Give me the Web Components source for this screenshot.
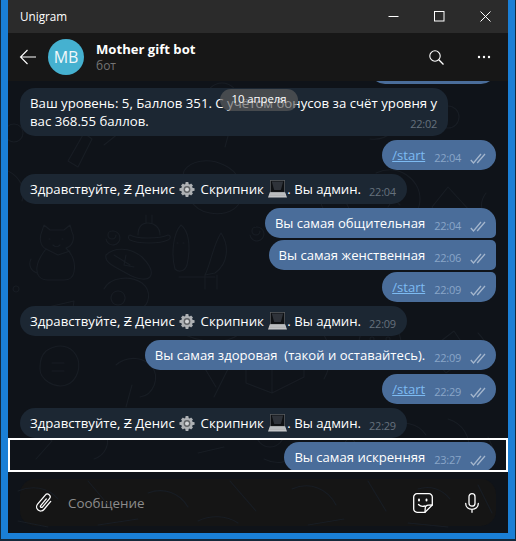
<!DOCTYPE html>
<html><head><meta charset="utf-8">
<style>
html,body{margin:0;height:100%;background:#15293b;overflow:hidden}
body{font-family:"Open Sans","Noto Sans",sans-serif;}
</style></head><body>
<ug-window>
  <ug-title slot="title">Unigram</ug-title>
  <ug-header slot="header" name="Mother gift bot" sub="бот" initials="MB"></ug-header>
  <ug-chat slot="chat">
    <ug-bubble out clip link time="22:02">/start</ug-bubble>
    <ug-bubble time="22:02" wide>Ваш уровень: 5, Баллов 351. С учётом бонусов за счёт уровня у<br>вас 368.55 баллов.</ug-bubble>
    <ug-bubble out link time="22:04">/start</ug-bubble>
    <ug-bubble time="22:04"><ug-greet></ug-greet></ug-bubble>
    <ug-bubble out group="first" time="22:04">Вы самая общительная</ug-bubble>
    <ug-bubble out group="mid" time="22:06">Вы самая женственная</ug-bubble>
    <ug-bubble out group="last" link time="22:09">/start</ug-bubble>
    <ug-bubble time="22:09"><ug-greet></ug-greet></ug-bubble>
    <ug-bubble out time="22:09">Вы самая здоровая  (такой и оставайтесь).</ug-bubble>
    <ug-bubble out link time="22:29">/start</ug-bubble>
    <ug-bubble time="22:29"><ug-greet></ug-greet></ug-bubble>
    <ug-bubble out selected time="23:27">Вы самая искренняя</ug-bubble>
  </ug-chat>
  <ug-composer slot="composer"></ug-composer>
</ug-window>
<script>
function def(name, css, html){
  customElements.define(name, class extends HTMLElement{
    connectedCallback(){
      if(this.shadowRoot) return;
      const r=this.attachShadow({mode:'open'});
      r.innerHTML='<style>'+css+'</style>'+(typeof html==='function'?html(this):html);
    }
  });
}
const doodles=`<svg class="bg" width="500" height="452" viewBox="0 0 500 452" fill="none" stroke="#181d24" stroke-width="1.100" stroke-linecap="round" stroke-linejoin="round">
<g transform="translate(26,144)"><path d="M8 6l2-6 6 5h14l6-5 2 7c3 6 1 14-6 16 6 6 10 14 8 24-1 6-5 8-10 8H14C6 55 2 50 3 42c1-8 5-13 9-18C6 21 5 13 8 6z"/><path d="M15 14h1M28 14h1M19 20c2 2 5 2 7 0M3 48c-6-2-9-8-6-14M12 24l12 6 12-4"/></g>
<g transform="translate(96,166)"><path d="M2 8c8-8 24-8 36 2 6 6 12 14 8 20-4 4-14 2-24-4C12 20 0 16 2 8z"/><path d="M10 8l16 10M22 8l-2 10 10 2"/></g>
<g transform="translate(122,134)"><path d="M0 20c6 4 30 4 38 0 3 0 3 4 0 5-8 4-30 4-38 0-2-1-2-5 0-5zM8 20c0-8 4-12 10-12s12 4 12 12M16 8V0M22 8V0"/></g>
<g transform="translate(165,144)"><path d="M8 0c8 6 10 22 6 40-2 6-8 8-12 4C-2 30 0 8 8 0z"/><path d="M4 18h1M10 18h1M6 52h36"/></g>
<g transform="translate(195,152)"><path d="M18 0c8 12 8 30-6 40l-10 2C8 30 10 12 18 0z"/><path d="M2 42v14M14 42v14"/></g>
<path d="M108 154a4 4 0 1 1-4-4 7 7 0 1 1-6 8"/>
<path d="M252 150a4 4 0 1 1-4-4 7 7 0 1 1-6 8"/>
<g transform="translate(168,80)"><path d="M8 10c6-10 24-14 40-6 14 6 24 24 14 40-6 8-18 10-28 8C16 50 2 26 8 10z"/><path d="M22 28h1M40 28h1M26 38c4 3 10 3 14 0"/></g>
<path d="M90 12c6 10 22 10 30 0M80 40c12-6 30-6 44 2M96 64l20-16"/>
<circle cx="214" cy="18" r="16"/><path d="M205 42l18 2-6 22"/>
<g transform="translate(60,50)"><path d="M0 30l16-28 8 6-14 28zM4 44h28"/></g>
<path d="M342 22c18-14 40-8 46 8s-8 30-26 28"/><circle cx="440" cy="36" r="11"/><path d="M436 62c8 12 26 14 34 4"/>
<path d="M316 96c-8 12-6 34 10 42M330 104l14 30-14 8"/>
<path d="M368 92c22-10 44 6 44 26s-24 30-42 20"/><path d="M378 110l14 14M392 108l-12 18"/>
<path d="M440 106l22 24-22 16-16-20zM478 112c-6 8-6 16 0 24"/>
<path d="M0 90c12 6 18 18 14 30M30 96c-2 6 0 12 6 14"/><circle cx="6" cy="52" r="9"/>
<g transform="translate(92,194)"><path d="M4 14C10 2 30 0 42 8c10 8 8 22-2 26"/><path d="M18 16a7 7 0 1 0 0.100 0"/></g>
<path d="M40 226l26-6-2 14-24 4zM8 205a3 3 0 1 0 .1 0"/>
<g transform="translate(236,262)"><path d="M2 14l30-14 28 8-32 14zM2 14v26l26 10V22M60 8v26L28 50"/></g>
<g transform="translate(30,264)"><path d="M8 6c12-8 24-6 30 4s2 26-10 30S2 34 2 24 4 10 8 6zM14 18h12M14 26h12"/></g>
<path d="M108 284c12-10 28-8 36 2s2 28-12 30M124 304l-6 22"/>
<path d="M170 250c20 12 46 14 60 4M190 276l18 30M224 280l-18 36"/>
<g transform="translate(350,240)"><circle cx="22" cy="22" r="21"/><circle cx="14" cy="18" r="2"/><circle cx="30" cy="18" r="2"/><path d="M12 30c6 5 14 5 20 0"/></g>
<path d="M316 254c8 14 8 30 0 44M298 272h34"/>
<path d="M420 270l26-20 16 24-24 18zM470 252c8 8 12 18 10 30"/>
<path d="M60 354c12-12 28-10 38 0 4 8 0 20-12 24M22 344l22 16-16 18"/>
<path d="M170 346c16-8 30-4 40 6M190 372l26-6"/><circle cx="262" cy="352" r="14"/><path d="M256 378c12 6 24 4 32-4"/>
<path d="M330 340l24 30M354 340l-24 30M380 348c14-10 30-6 38 6"/><path d="M440 338c14 4 24 18 20 34M480 356l8 18"/>
<path d="M10 410c14-6 30-4 40 8M80 400l22 26M140 412c16-6 32 0 40 14M222 400l26 30M284 408c18-8 36 0 44 16M360 400l18 30M410 408c12-4 24 0 32 10M470 404l14 28"/>
<path d="M10 440l30 6M90 444l40-6M190 440c12-6 28-6 40 2M300 444l36-6M400 442l40 4"/>
</svg>`;
def('ug-window',`:host{display:flex;flex-direction:column;box-sizing:border-box;width:514px;height:539px;margin:0 1px;border:solid #1a7fd6;border-width:0 7px 6px 7px;background:#10141a;}
.wall{flex:1;min-height:0;position:relative;display:flex;flex-direction:column;overflow:hidden;background:#0f1319}
.bg{position:absolute;left:0;top:0}
`,`<slot name="title"></slot><slot name="header"></slot><div class="wall">${doodles}<slot name="chat"></slot><slot name="composer"></slot></div>`);

def('ug-title',`:host{display:flex;flex:none;align-items:center;height:33px;background:#2b2b2b;color:#fff;font:11.700px/1 "Open Sans",sans-serif}
.t{margin-left:12px;flex:1}
.b{width:46px;height:33px;display:flex;align-items:center;justify-content:center}
svg{display:block}`,
`<span class="t"><slot></slot></span>
<span class="b"><svg width="11" height="11" viewBox="0 0 11 11"><path d="M0.500 5.500h10" stroke="#fff" fill="none"/></svg></span>
<span class="b"><svg width="11" height="11" viewBox="0 0 11 11"><rect x=".5" y=".5" width="9.500" height="9.500" stroke="#fff" fill="none"/></svg></span>
<span class="b"><svg width="11" height="11" viewBox="0 0 11 11"><path d="M.5.5l10 10M10.500.5l-10 10" stroke="#fff" fill="none"/></svg></span>`);

def('ug-header',`:host{display:flex;flex:none;align-items:center;height:48px;background:#171717;color:#fff;box-sizing:border-box}
.back{width:40px;display:flex;justify-content:center}
.av{width:36px;height:36px;border-radius:50%;background:#45b1d0;color:#f2f8fb;font:16px/36px "Open Sans",sans-serif;text-align:center}
.info{margin-left:12px;flex:1;display:flex;flex-direction:column;margin-top:-1px}
.n{font:700 13.100px/18px "Open Sans",sans-serif}
.s{font:12px/16px "Open Sans",sans-serif;color:#747474}
.i{width:48px;height:48px;display:flex;align-items:center;justify-content:center}
`,h=>`<span class="back"><svg width="18" height="16" viewBox="0 0 18 16"><path d="M17 8H1.500M8.500 1L1.500 8l7 7" stroke="#fff" fill="none" stroke-width="1.100"/></svg></span>
<span class="av">${h.getAttribute('initials')}</span>
<span class="info"><span class="n">${h.getAttribute('name')}</span><span class="s">${h.getAttribute('sub')}</span></span>
<span class="i"><svg width="15" height="15" viewBox="0 0 15 15"><circle cx="6" cy="6" r="5.200" stroke="#fff" fill="none" stroke-width="1.100"/><path d="M9.800 9.800l4.700 4.700" stroke="#fff" stroke-width="1.300"/></svg></span>
<span class="i"><svg width="14" height="4" viewBox="0 0 14 4"><circle cx="2" cy="2" r="1.200" fill="#fff"/><circle cx="7" cy="2" r="1.200" fill="#fff"/><circle cx="12" cy="2" r="1.200" fill="#fff"/></svg></span>`);

def('ug-chat',`:host{display:flex;flex:1;min-height:0;position:relative;flex-direction:column;justify-content:flex-end;overflow:hidden;padding:0 12px;gap:4px}
.date{position:absolute;left:212px;top:8px;height:22px;width:78px;border-radius:11px;background:rgba(92,92,92,.66);color:#fff;font:11.300px/20px "Open Sans",sans-serif;text-align:center;z-index:3}
`,`<slot></slot><span class="date">10 апреля</span>`);

def('ug-greet',`:host{display:inline;font-size:13.200px}
svg{display:inline-block;vertical-align:baseline}
.g{margin:-4px 2px -4px 1px}
.l{margin:-5px 0 -5px 1px}`,
`Здравствуйте, Ƶ Денис <svg class="g" width="16" height="17" viewBox="0 0 18 18"><g fill="#aeb1b4"><circle cx="9" cy="9" r="6.500"/><path d="M7.500 .5h3l.5 3h-4zM7.500 17.500h3l.5-3h-4zM.5 7.500v3l3 .5v-4zM17.500 7.500v3l-3 .5v-4zM2.300 4.400l2.100-2.100 2.500 1.800-2.800 2.800zM13.600 15.700l2.100-2.100-1.800-2.500-2.800 2.800zM13.600 2.300l2.100 2.100-1.800 2.500-2.800-2.800zM2.300 13.600l2.100 2.100 2.500-1.800-2.800-2.800z"/></g><circle cx="9" cy="9" r="3.800" fill="#5f6265"/><circle cx="9" cy="9" r="2.200" fill="#d2d4d6"/></svg> Скрипник <svg class="l" width="19" height="20" viewBox="0 0 20 20"><rect x="2.500" y="1" width="15" height="12.500" fill="#0e1013" stroke="#5a5d60" stroke-width=".8"/><path d="M4 2h12l-2.500 9h-7z" fill="#2f333a"/><path d="M2 13.500h16l2 5.500H0z" fill="#c6c8ca"/><path d="M2 15.300h16M1.500 17h17" stroke="#96989b" stroke-width=".5"/></svg>. Вы админ.`);

def('ug-bubble',`:host{display:flex;flex:none;position:relative}
:host([out]){justify-content:flex-end}
:host([group=mid]),:host([group=last]){margin-top:-2px}
:host([selected])::after{content:"";position:absolute;left:-12px;right:-12px;top:-4px;bottom:0;border:2px solid #fff;box-sizing:border-box;z-index:2}
.b{display:block;box-sizing:border-box;height:30px;background:#1c2733;color:#fff;border-radius:15px;padding:6px 11px 6px 10px;font:13.100px/18px "Open Sans",sans-serif;white-space:pre-wrap}
:host([out]) .b{background:#4a6d9a;padding-right:10px}
:host([group=first]) .b{border-bottom-right-radius:5px}
:host([group=mid]) .b{border-top-right-radius:5px;border-bottom-right-radius:5px}
:host([group=last]) .b{border-top-right-radius:5px}
:host([link]) .c{color:#7dbbf2;text-decoration:underline}
.m{float:right;display:inline-flex;align-items:center;gap:9px;margin-left:8px;height:18px;position:relative;top:3px;font-size:11px;letter-spacing:-.25px;color:#66717d}
:host([out]) .m{color:#89a5c8;margin-left:9px}
svg{display:block}
:host([wide]) .b{width:428px;height:48px;font-size:13.230px;padding-right:4px}
:host([wide]) .m{font-size:11px;margin-right:7px}
:host([clip]){margin-top:-30px}
:host([clip]) .b{width:126px}
`,h=>{const o=h.hasAttribute('out');
return `<span class="b"><span class="c"><slot></slot></span><span class="m">${h.getAttribute('time')}${o?`<svg width="16" height="11" viewBox="0 0 16 11" fill="none" stroke="#a4b6cd" stroke-width="1.300"><path d="M.8 7l2.700 3L11 1M7.200 10L15 1"/></svg>`:''}</span></span>`});

def('ug-composer',`:host{display:flex;flex:none;align-items:center;height:61px;padding:0 12px;box-sizing:border-box}
.box{flex:1;height:47px;border-radius:15px;background:#151515;display:flex;align-items:center;color:#8c8c8c;font:13.400px "Open Sans",sans-serif}
.a{width:48px;display:flex;justify-content:center}
.p{flex:1}
.s{width:26px;display:flex;justify-content:center;margin-right:25px}
.r{width:22px;display:flex;justify-content:center;margin-right:13px;}
`,`<div class="box"><span class="a"><svg width="22" height="22" viewBox="0 0 24 24" fill="none" stroke="#fff" stroke-width="1.400" stroke-linecap="round"><path transform="rotate(40 12 12)" d="M16.500 6v11.500a4.500 4.500 0 0 1-9 0V4.500a3 3 0 0 1 6 0v12a1.200 1.200 0 0 1-2.400 0V7"/></svg></span><span class="p">Сообщение</span>
<span class="s"><svg width="20" height="20" viewBox="0 0 20 20" fill="none" stroke="#fff" stroke-width="1.300" stroke-linejoin="round" stroke-linecap="round"><path d="M19.300 12V4a3.300 3.300 0 0 0-3.300-3.300H4A3.300 3.300 0 0 0 .7 4v12A3.300 3.300 0 0 0 4 19.300h8z"/><path d="M12 19.300l.2-3.800a3.500 3.500 0 0 1 3.300-3.400l3.800-.1"/><path d="M5.500 11.500c1.500 1.700 4 2.200 6.500 1.500"/><path d="M6 6.500v1M13.500 6.500v1" stroke-width="1.900"/></svg></span>
<span class="r"><svg width="14" height="20" viewBox="0 0 14 20" fill="none" stroke="#fff" stroke-width="1.300" stroke-linecap="round"><rect x="4" y=".7" width="6" height="12.500" rx="3"/><path d="M.7 10.500c0 3.500 2.800 5.800 6.300 5.800s6.300-2.300 6.300-5.800M7 16.300v3"/></svg></span></div>`);
</script>
</body></html>
